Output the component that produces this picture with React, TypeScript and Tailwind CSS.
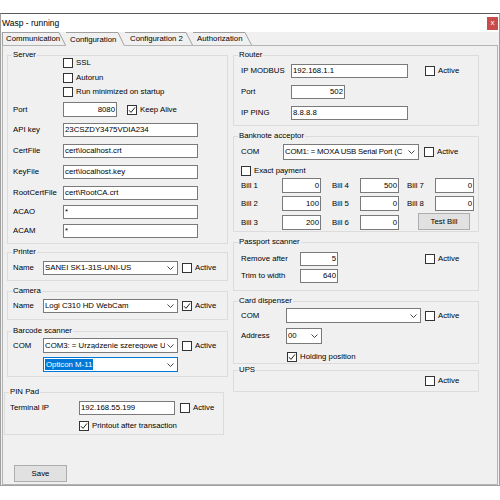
import React from 'react';

type GroupProps = { title: string; className?: string; children?: React.ReactNode };

// Classic WinForms group box: thin frame, caption sitting on the top edge
function Group({ title, className = '', children }: GroupProps) {
  return (
    <div className={`relative flex shrink-0 flex-col border border-[#dcdcdc] ${className}`}>
      <span className="absolute -top-[6px] left-[4px] bg-[#f0f0f0] px-px leading-[10px]">{title}</span>
      {children}
    </div>
  );
}

function Check({ label, checked = false, className = '' }: { label?: string; checked?: boolean; className?: string }) {
  return (
    <span className={`flex items-center ${className}`}>
      <span className="flex h-[10px] w-[10px] shrink-0 items-center justify-center border border-[#333] bg-white">
        {checked && (
          <svg width="8" height="8" viewBox="0 0 8 8">
            <path d="M1 4.2 L3 6.4 L7 1.4" fill="none" stroke="#222" strokeWidth="1" />
          </svg>
        )}
      </span>
      {label && <span className="ml-[3px] whitespace-nowrap leading-none">{label}</span>}
    </span>
  );
}

function TextBox({ value, right = false, className = '' }: { value: string; right?: boolean; className?: string }) {
  return (
    <span
      className={`flex shrink-0 items-center overflow-hidden whitespace-nowrap border border-[#7a7a7a] bg-white px-px leading-none ${
        right ? 'justify-end' : ''
      } ${className}`}
    >
      {value}
    </span>
  );
}

function Combo({ value, focus = false, className = '' }: { value: string; focus?: boolean; className?: string }) {
  return (
    <span
      className={`flex shrink-0 items-center border bg-white pl-px leading-none ${
        focus ? 'border-[#0078d7]' : 'border-[#7a7a7a]'
      } ${className}`}
    >
      <span className="flex-1 overflow-hidden whitespace-nowrap">
        {focus ? <span className="inline-flex h-[11px] items-center bg-[#0078d7] px-px text-white">{value}</span> : value}
      </span>
      <svg className="ml-[2px] mr-[3px] shrink-0" width="7" height="4" viewBox="0 0 7 4">
        <path d="M0.5 0.5 L3.5 3.5 L6.5 0.5" fill="none" stroke="#444" strokeWidth="1" />
      </svg>
    </span>
  );
}

function Button({ label, className = '' }: { label: string; className?: string }) {
  return (
    <button className={`flex shrink-0 items-center justify-center border border-[#adadad] bg-[#e1e1e1] leading-none ${className}`}>
      {label}
    </button>
  );
}

const tabs = [
  { label: 'Communication', w: 'w-[57px] border-l', pl: 'pl-[3px]', active: false },
  { label: 'Configuration', w: 'w-[52px]', pl: 'pl-[4px]', active: true },
  { label: 'Configuration 2', w: 'w-[61px]', pl: 'pl-[5px]', active: false },
  { label: 'Authorization', w: 'w-[52px]', pl: 'pl-[4px]', active: false },
];

function TabStrip() {
  return (
    <div className="relative z-10 flex h-[13px] items-start pl-px">
      {tabs.map((t) => (
        <div key={t.label} className={`flex ${t.active ? 'h-[14px] bg-[#f0f0f0]' : 'h-[13px]'}`}>
          <div className={`flex items-center whitespace-nowrap border-t border-[#a0a0a0] ${t.w} ${t.pl}`}>{t.label}</div>
          <svg className="shrink-0" width="7" height={t.active ? 14 : 13} viewBox={`0 0 7 ${t.active ? 14 : 13}`}>
            <path d={`M0 0.5 L6.5 ${t.active ? 14 : 13}`} fill="none" stroke="#a0a0a0" strokeWidth="1" />
          </svg>
        </div>
      ))}
    </div>
  );
}

export default function App() {
  return (
    <div className="h-[500px] w-[500px] overflow-hidden bg-white text-[7.8px] text-black [font-family:'Liberation_Sans',Arial,sans-serif]">
      <div className="mt-[13px] flex h-[473px] w-[500px] flex-col border border-[#a0a0a0] border-t-[#5a5a5a] bg-[#f0f0f0]">
        {/* title bar */}
        <div className="flex h-[18px] shrink-0 items-center justify-between bg-white pl-px">
          <span className="text-[8.5px] leading-none">Wasp - running</span>
          <span className="mr-px flex h-[13px] w-[11px] items-center justify-center bg-[#c94c4c] pb-px text-[8px] leading-none text-white">
            x
          </span>
        </div>

        <TabStrip />

        <div className="mx-px flex h-[440px] shrink-0 border border-[#b4b4b4]">
          {/* left column */}
          <div className="ml-[4px] flex w-[221px] shrink-0 flex-col pt-[9px]">
            <Group title="Server" className="h-[189px] pl-[5px]">
              <div className="mt-px flex h-[11px] items-center pl-[50px]">
                <Check label="SSL" />
              </div>
              <div className="mt-[4px] flex h-[11px] items-center pl-[50px]">
                <Check label="Autorun" />
              </div>
              <div className="mt-[3px] flex h-[11px] items-center pl-[50px]">
                <Check label="Run minimized on startup" />
              </div>
              <div className="mt-[5px] flex h-[15px] items-center">
                <span className="w-[50px]">Port</span>
                <TextBox value="8080" right className="h-[15px] w-[54px]" />
                <Check label="Keep Alive" checked className="ml-[10px]" />
              </div>
              <div className="mt-[6px] flex h-[14px] items-center">
                <span className="w-[50px]">API key</span>
                <TextBox value="23CSZDY3475VDIA234" className="h-[14px] w-[135px]" />
              </div>
              <div className="mt-[7px] flex h-[14px] items-center">
                <span className="w-[50px]">CertFile</span>
                <TextBox value="cert\localhost.crt" className="h-[14px] w-[135px]" />
              </div>
              <div className="mt-[7px] flex h-[14px] items-center">
                <span className="w-[50px]">KeyFile</span>
                <TextBox value="cert\localhost.key" className="h-[14px] w-[135px]" />
              </div>
              <div className="mt-[7px] flex h-[14px] items-center">
                <span className="w-[50px] whitespace-nowrap">RootCertFile</span>
                <TextBox value="cert\RootCA.crt" className="h-[14px] w-[135px]" />
              </div>
              <div className="mt-[5px] flex h-[14px] items-center">
                <span className="w-[50px]">ACAO</span>
                <TextBox value="*" className="h-[14px] w-[135px]" />
              </div>
              <div className="mt-[5px] flex h-[14px] items-center">
                <span className="w-[50px]">ACAM</span>
                <TextBox value="*" className="h-[14px] w-[135px]" />
              </div>
            </Group>

            <Group title="Printer" className="mt-[8px] h-[29px] pl-[5px]">
              <div className="mt-[8px] flex h-[14px] items-center">
                <span className="w-[30px]">Name</span>
                <Combo value="SANEI SK1-31S-UNI-US" className="h-[14px] w-[135px]" />
                <Check label="Active" className="ml-[4px]" />
              </div>
            </Group>

            <Group title="Camera" className="mt-[10px] h-[29px] pl-[5px]">
              <div className="mt-[7px] flex h-[14px] items-center">
                <span className="w-[30px]">Name</span>
                <Combo value="Logi C310 HD WebCam" className="h-[14px] w-[135px]" />
                <Check label="Active" checked className="ml-[4px]" />
              </div>
            </Group>

            <Group title="Barcode scanner" className="mt-[11px] h-[46px] pl-[5px]">
              <div className="mt-[6px] flex h-[15px] items-center">
                <span className="w-[30px]">COM</span>
                <Combo value="COM3: = Urządzenie szeregowe U" className="h-[15px] w-[135px]" />
                <Check label="Active" className="ml-[4px]" />
              </div>
              <div className="mt-[4px] flex h-[15px] items-center pl-[30px]">
                <Combo value="Opticon M-11" focus className="h-[15px] w-[135px]" />
              </div>
            </Group>

            <Group title="PIN Pad" className="-ml-[3px] mt-[15px] h-[43px] w-[220px] pl-[5px]">
              <div className="mt-[8px] flex h-[14px] items-center">
                <span className="w-[69px]">Terminal IP</span>
                <TextBox value="192.168.55.199" className="h-[14px] w-[96px]" />
                <Check label="Active" className="ml-[5px]" />
              </div>
              <div className="mt-[5px] flex h-[11px] items-center pl-[69px]">
                <Check label="Printout after transaction" checked />
              </div>
            </Group>

            <Button label="Save" className="ml-[7px] mt-[30px] h-[17px] w-[53px]" />
          </div>

          {/* right column */}
          <div className="ml-[5px] flex w-[246px] shrink-0 flex-col pt-[9px]">
            <Group title="Router" className="h-[71px] pl-[7px]">
              <div className="mt-[8px] flex h-[14px] items-center">
                <span className="w-[50px]">IP MODBUS</span>
                <TextBox value="192.168.1.1" className="h-[14px] w-[117px]" />
                <Check label="Active" className="ml-[17px]" />
              </div>
              <div className="mt-[7px] flex h-[14px] items-center">
                <span className="w-[50px]">Port</span>
                <TextBox value="502" right className="h-[14px] w-[54px]" />
              </div>
              <div className="mt-[7px] flex h-[14px] items-center">
                <span className="w-[50px]">IP PING</span>
                <TextBox value="8.8.8.8" className="h-[14px] w-[117px]" />
              </div>
            </Group>

            <Group title="Banknote acceptor" className="mt-[10px] h-[96px] pl-[7px]">
              <div className="mt-[7px] flex h-[16px] items-center">
                <span className="w-[42px]">COM</span>
                <Combo value="COM1: = MOXA USB Serial Port (C" className="h-[16px] w-[136px] tracking-[-0.2px]" />
                <Check label="Active" className="ml-[5px]" />
              </div>
              <div className="mt-[5px] flex h-[11px] items-center">
                <Check label="Exact payment" />
              </div>
              <div className="mt-[2px] flex h-[15px] items-center">
                <span className="w-[41px]">Bill 1</span>
                <TextBox value="0" right className="h-[15px] w-[39px]" />
                <span className="ml-[11px] w-[28px]">Bill 4</span>
                <TextBox value="500" right className="h-[15px] w-[39px]" />
                <span className="ml-[8px] w-[28px]">Bill 7</span>
                <TextBox value="0" right className="h-[15px] w-[39px]" />
              </div>
              <div className="mt-[3px] flex h-[15px] items-center">
                <span className="w-[41px]">Bill 2</span>
                <TextBox value="100" right className="h-[15px] w-[39px]" />
                <span className="ml-[11px] w-[28px]">Bill 5</span>
                <TextBox value="0" right className="h-[15px] w-[39px]" />
                <span className="ml-[8px] w-[28px]">Bill 8</span>
                <TextBox value="0" right className="h-[15px] w-[39px]" />
              </div>
              <div className="mt-[2px] flex h-[17px] items-end">
                <div className="flex h-[15px] items-center">
                  <span className="w-[41px]">Bill 3</span>
                  <TextBox value="200" right className="h-[15px] w-[39px]" />
                  <span className="ml-[11px] w-[28px]">Bill 6</span>
                  <TextBox value="0" right className="h-[15px] w-[39px]" />
                </div>
                <Button label="Test Bill" className="ml-[19px] h-[17px] w-[52px]" />
              </div>
            </Group>

            <Group title="Passport scanner" className="mt-[10px] h-[49px] pl-[7px]">
              <div className="mt-[9px] flex h-[14px] items-center">
                <span className="w-[59px]">Remove after</span>
                <TextBox value="5" right className="h-[14px] w-[38px]" />
                <Check label="Active" className="ml-[87px]" />
              </div>
              <div className="mt-[3px] flex h-[14px] items-center">
                <span className="w-[59px]">Trim to width</span>
                <TextBox value="640" right className="h-[14px] w-[38px]" />
              </div>
            </Group>

            <Group title="Card dispenser" className="mt-[10px] h-[63px] pl-[7px]">
              <div className="mt-[6px] flex h-[15px] items-center">
                <span className="w-[45px]">COM</span>
                <Combo value="" className="h-[15px] w-[135px]" />
                <Check label="Active" className="ml-[4px]" />
              </div>
              <div className="mt-[5px] flex h-[16px] items-center">
                <span className="w-[45px]">Address</span>
                <Combo value="00" className="h-[16px] w-[36px]" />
              </div>
              <div className="mt-[7px] flex h-[11px] items-center pl-[46px]">
                <Check label="Holding position" checked />
              </div>
            </Group>

            <Group title="UPS" className="mt-[6px] h-[22px] pl-[7px]">
              <div className="mt-[4px] flex h-[11px] items-center pl-[184px]">
                <Check label="Active" />
              </div>
            </Group>
          </div>
        </div>
      </div>
    </div>
  );
}
